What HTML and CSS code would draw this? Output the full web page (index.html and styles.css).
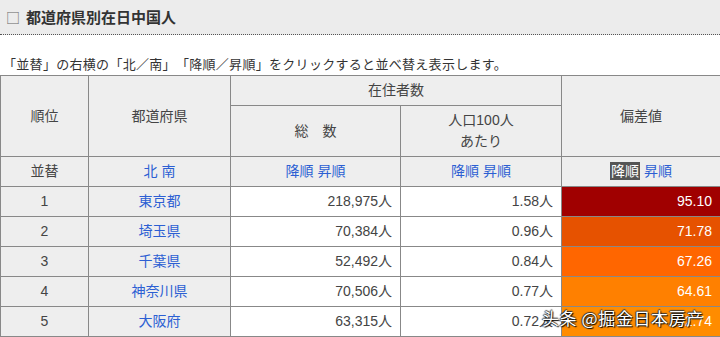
FILE: index.html
```html
<!DOCTYPE html>
<html lang="ja">
<head>
<meta charset="utf-8">
<title>都道府県別在日中国人</title>
<link rel="stylesheet" href="styles.css">
</head>
<body>
<div class="page">
  <h2 class="title"><span class="box">□</span>都道府県別在日中国人</h2>
  <p class="note">「並替」の右横の「北／南」「降順／昇順」をクリックすると並べ替え表示します。</p>
  <table class="rank">
    <colgroup>
      <col class="c1"><col class="c2"><col class="c3"><col class="c4"><col class="c5">
    </colgroup>
    <thead>
      <tr class="h1">
        <th rowspan="2">順位</th>
        <th rowspan="2">都道府県</th>
        <th colspan="2">在住者数</th>
        <th rowspan="2">偏差値</th>
      </tr>
      <tr class="h2">
        <th>総　数</th>
        <th>人口100人<br>あたり</th>
      </tr>
      <tr class="h3">
        <th>並替</th>
        <th><a class="lk">北</a> <a class="lk">南</a></th>
        <th><a class="lk">降順</a> <a class="lk">昇順</a></th>
        <th><a class="lk">降順</a> <a class="lk">昇順</a></th>
        <th><span class="sel">降順</span> <a class="lk">昇順</a></th>
      </tr>
    </thead>
    <tbody>
      <tr><td class="g">1</td><td class="g"><a class="lk">東京都</a></td><td class="n">218,975人</td><td class="n">1.58人</td><td class="n v v1">95.10</td></tr>
      <tr><td class="g">2</td><td class="g"><a class="lk">埼玉県</a></td><td class="n">70,384人</td><td class="n">0.96人</td><td class="n v v2">71.78</td></tr>
      <tr><td class="g">3</td><td class="g"><a class="lk">千葉県</a></td><td class="n">52,492人</td><td class="n">0.84人</td><td class="n v v3">67.26</td></tr>
      <tr><td class="g">4</td><td class="g"><a class="lk">神奈川県</a></td><td class="n">70,506人</td><td class="n">0.77人</td><td class="n v v4">64.61</td></tr>
      <tr><td class="g">5</td><td class="g"><a class="lk">大阪府</a></td><td class="n">63,315人</td><td class="n">0.72人</td><td class="n v v5">62.74</td></tr>
    </tbody>
  </table>
  <div class="watermark">头条 @掘金日本房产</div>
</div>
</body>
</html>
```
FILE: styles.css
```css
* { box-sizing: border-box; }
html, body { margin: 0; padding: 0; background: #fff; }
body {
  font-family: "Liberation Sans", "Noto Sans CJK JP", sans-serif;
  color: #333;
  width: 720px;
  height: 337px;
  overflow: hidden;
  text-spacing-trim: space-all;
}
.page { position: relative; width: 720px; }
.title {
  margin: 0;
  height: 35px;
  background: #ececec;
  border-bottom: 1px dotted #555;
  font-size: 15px;
  font-weight: bold;
  line-height: 34px;
  padding-left: 6px;
  color: #333;
  font-family: "Noto Sans CJK JP", sans-serif;
}
.box {
  font-weight: normal;
  font-size: 14px;
  color: #666;
  margin-right: 6px;
}
.note {
  margin: 19px 0 1px 0;
  padding-left: 3px;
  font-size: 13px;
  letter-spacing: 0.3px;
  line-height: 20px;
  color: #333;
  font-family: "Noto Sans CJK JP", sans-serif;
  text-spacing-trim: space-all;
}
.rank {
  width: 720px;
  table-layout: fixed;
  border-collapse: collapse;
  border: 1px solid #888;
  font-size: 14px;
  line-height: 21px;
}
.c1 { width: 88px; }
.c2 { width: 142px; }
.c3 { width: 170px; }
.c4 { width: 161px; }
.c5 { width: 159px; }
.rank th, .rank td {
  border: 1px solid #888;
  padding: 4px 8px;
  height: 30px;
}
.rank th {
  background: #eeeeee;
  font-weight: normal;
  color: #444;
  text-align: center;
  vertical-align: middle;
}
.rank .h2 th { height: 51px; }
.lk { color: #2c5fd3; text-decoration: none; }
.sel { background: #555; color: #fff; padding: 1px 1px; }
.rank td.g { background: #eeeeee; text-align: center; color: #444; }
.rank td.n { text-align: right; background: #fff; color: #444; }
.rank td.v { color: #fff; }
.rank td.v1 { background: #a00000; }
.rank td.v2 { background: #e65200; }
.rank td.v3 { background: #ff6600; }
.rank td.v4 { background: #ff8000; }
.rank td.v5 { background: #ff8c00; }
.watermark {
  position: absolute;
  left: 542px;
  top: 306px;
  font-family: "Noto Sans CJK SC", sans-serif;
  font-size: 17px;
  letter-spacing: 0.6px;
  line-height: 24px;
  color: #fff;
  text-shadow: 1px 1px 1px #000, -1px 0 1px #333, 0 -1px 1px #333;
  white-space: nowrap;
}
```
